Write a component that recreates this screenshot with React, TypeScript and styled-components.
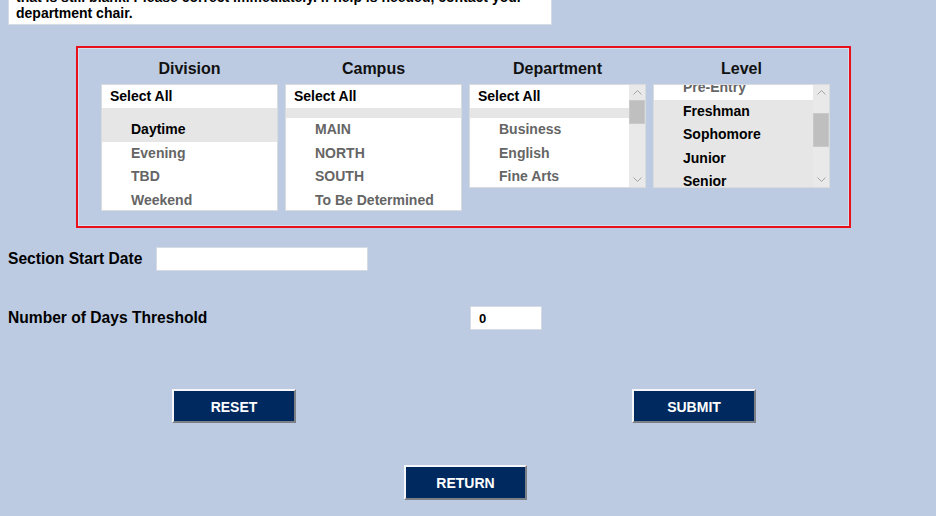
import React, { useLayoutEffect, useRef } from "react";
import styled, { createGlobalStyle } from "styled-components";

const GlobalStyle = createGlobalStyle`
  html, body {
    margin: 0;
    padding: 0;
    background: #bccbe2;
    overflow: hidden;
  }
  body {
    font-family: "Liberation Sans", Arial, sans-serif;
    color: #000;
  }
`;

const Page = styled.div`
  width: 936px;
  height: 516px;
  box-sizing: border-box;
  padding: 0 8px;
  overflow: hidden;
  display: flex;
  flex-direction: column;
`;

const Notice = styled.div`
  width: 544px;
  box-sizing: border-box;
  margin-top: -16px;
  padding: 4px 7px 3px;
  background: #fff;
  border: 1px solid #d4dbe6;
  font-size: 14px;
  font-weight: bold;
  line-height: 16px;
`;

const FilterBox = styled.div`
  margin: 21px 0 0 68px;
  width: 775px;
  height: 182px;
  box-sizing: border-box;
  border: 2px solid #e8111b;
  box-shadow: inset 0 0 0 1px #d3deef;
  padding: 10px 0 0 23px;
  display: grid;
  grid-template-columns: repeat(4, 177px);
  column-gap: 7px;
  align-items: start;
`;

const Column = styled.div`
  display: flex;
  flex-direction: column;
`;

const ColumnTitle = styled.div`
  height: 22px;
  line-height: 22px;
  margin-bottom: 4px;
  text-align: center;
  font-size: 16px;
  font-weight: bold;
  color: #111;
`;

const ListFrame = styled.div<{ $h: number }>`
  height: ${(p) => p.$h}px;
  box-sizing: border-box;
  border: 1px solid #d9dbdf;
  background: #fff;
  display: flex;
  overflow: hidden;
`;

const ListViewport = styled.div`
  flex: 1;
  min-width: 0;
  overflow: hidden;
`;

const AllRow = styled.div`
  height: 23px;
  line-height: 23px;
  padding-left: 8px;
  font-size: 14px;
  font-weight: bold;
  color: #000;
  white-space: nowrap;
`;

const GroupStripe = styled.div`
  height: 10px;
  background: #e6e6e6;
`;

const OptionRow = styled.div<{ $selected?: boolean }>`
  height: 23.5px;
  line-height: 23.5px;
  padding-left: 29px;
  font-size: 14px;
  font-weight: bold;
  white-space: nowrap;
  color: ${(p) => (p.$selected ? "#000" : "#656565")};
  background: ${(p) => (p.$selected ? "#e6e6e6" : "transparent")};
`;

const ScrollBar = styled.div`
  width: 16px;
  flex: none;
  background: #e9e9e9;
  display: flex;
  flex-direction: column;
`;

const ScrollArrow = styled.div`
  height: 15px;
  flex: none;
  display: flex;
  align-items: center;
  justify-content: center;
`;

const ScrollTrack = styled.div`
  flex: 1;
  display: flex;
  flex-direction: column;
`;

const ScrollThumb = styled.div<{ $top: number; $size: number }>`
  margin-top: ${(p) => p.$top}px;
  height: ${(p) => p.$size}px;
  background: #bfbfbf;
  box-shadow: inset 0 0 0 1px #c9c9c9;
`;

const FieldRow = styled.div<{ $gap: number }>`
  margin-top: ${(p) => p.$gap}px;
  display: flex;
  align-items: center;
  height: 24px;
`;

const FieldLabel = styled.label<{ $w: number }>`
  width: ${(p) => p.$w}px;
  flex: none;
  font-size: 15.6px;
  font-weight: bold;
  color: #000;
`;

const TextBox = styled.input<{ $w: number }>`
  width: ${(p) => p.$w}px;
  height: 24px;
  box-sizing: border-box;
  border: 1px solid #d6dbe3;
  background: #fff;
  padding: 0 8px;
  font-family: "Liberation Sans", Arial, sans-serif;
  font-size: 13px;
  font-weight: bold;
  color: #000;
  outline: none;
`;

const ButtonGrid = styled.div`
  margin: 59px 0 0 -4px;
  display: grid;
  grid-template-columns: 460px 460px;
  justify-items: center;
`;

const ReturnRow = styled.div`
  margin: 42px 0 0 -4px;
  width: 923px;
  display: flex;
  justify-content: center;
`;

const NavyButton = styled.button<{ $w: number; $h: number }>`
  width: ${(p) => p.$w}px;
  height: ${(p) => p.$h}px;
  box-sizing: border-box;
  background: #002a5f;
  color: #fff;
  border-style: solid;
  border-width: 2px;
  border-color: #f4f6fa #7c7f85 #7c7f85 #f4f6fa;
  font-family: "Liberation Sans", Arial, sans-serif;
  font-size: 14px;
  font-weight: bold;
  padding: 1px 0 0;
  cursor: pointer;
`;

const Chevron = ({ down }: { down?: boolean }) => (
  <svg width="9" height="5" viewBox="0 0 9 5">
    <path
      d={down ? "M0.5 0.5 L4.5 4.5 L8.5 0.5" : "M0.5 4.5 L4.5 0.5 L8.5 4.5"}
      fill="none"
      stroke="#a3a3a3"
      strokeWidth="1"
    />
  </svg>
);

type Opt = { label: string; selected?: boolean };

type ListProps = {
  title: string;
  height: number;
  options: Opt[];
  scrollTop?: number;
  thumb?: { top: number; size: number };
};

const ListBox = ({ title, height, options, scrollTop = 0, thumb }: ListProps) => {
  const ref = useRef<HTMLDivElement>(null);
  useLayoutEffect(() => {
    if (ref.current) ref.current.scrollTop = scrollTop;
  }, [scrollTop]);
  return (
    <Column>
      <ColumnTitle>{title}</ColumnTitle>
      <ListFrame $h={height}>
        <ListViewport ref={ref}>
          <AllRow>Select All</AllRow>
          <GroupStripe />
          {options.map((o) => (
            <OptionRow key={o.label} $selected={o.selected}>
              {o.label}
            </OptionRow>
          ))}
        </ListViewport>
        {thumb && (
          <ScrollBar>
            <ScrollArrow>
              <Chevron />
            </ScrollArrow>
            <ScrollTrack>
              <ScrollThumb $top={thumb.top} $size={thumb.size} />
            </ScrollTrack>
            <ScrollArrow>
              <Chevron down />
            </ScrollArrow>
          </ScrollBar>
        )}
      </ListFrame>
    </Column>
  );
};

export default function App() {
  return (
    <>
      <GlobalStyle />
      <Page>
        <Notice>
          that is still blank. Please correct immediately. If help is needed, contact your
          <br />
          department chair.
        </Notice>

        <FilterBox>
          <ListBox
            title="Division"
            height={127}
            options={[
              { label: "Daytime", selected: true },
              { label: "Evening" },
              { label: "TBD" },
              { label: "Weekend" },
            ]}
          />
          <ListBox
            title="Campus"
            height={127}
            options={[
              { label: "MAIN" },
              { label: "NORTH" },
              { label: "SOUTH" },
              { label: "To Be Determined" },
            ]}
          />
          <ListBox
            title="Department"
            height={104}
            options={[
              { label: "Business" },
              { label: "English" },
              { label: "Fine Arts" },
            ]}
            thumb={{ top: 0, size: 24 }}
          />
          <ListBox
            title="Level"
            height={104}
            scrollTop={42}
            options={[
              { label: "Pre-Entry" },
              { label: "Freshman", selected: true },
              { label: "Sophomore", selected: true },
              { label: "Junior", selected: true },
              { label: "Senior", selected: true },
            ]}
            thumb={{ top: 13, size: 34 }}
          />
        </FilterBox>

        <FieldRow $gap={19}>
          <FieldLabel $w={148}>Section Start Date</FieldLabel>
          <TextBox $w={212} type="text" defaultValue="" />
        </FieldRow>

        <FieldRow $gap={35}>
          <FieldLabel $w={462}>Number of Days Threshold</FieldLabel>
          <TextBox $w={72} type="text" defaultValue="0" />
        </FieldRow>

        <ButtonGrid>
          <NavyButton $w={124} $h={34}>RESET</NavyButton>
          <NavyButton $w={124} $h={34}>SUBMIT</NavyButton>
        </ButtonGrid>

        <ReturnRow>
          <NavyButton $w={123} $h={35}>RETURN</NavyButton>
        </ReturnRow>
      </Page>
    </>
  );
}
